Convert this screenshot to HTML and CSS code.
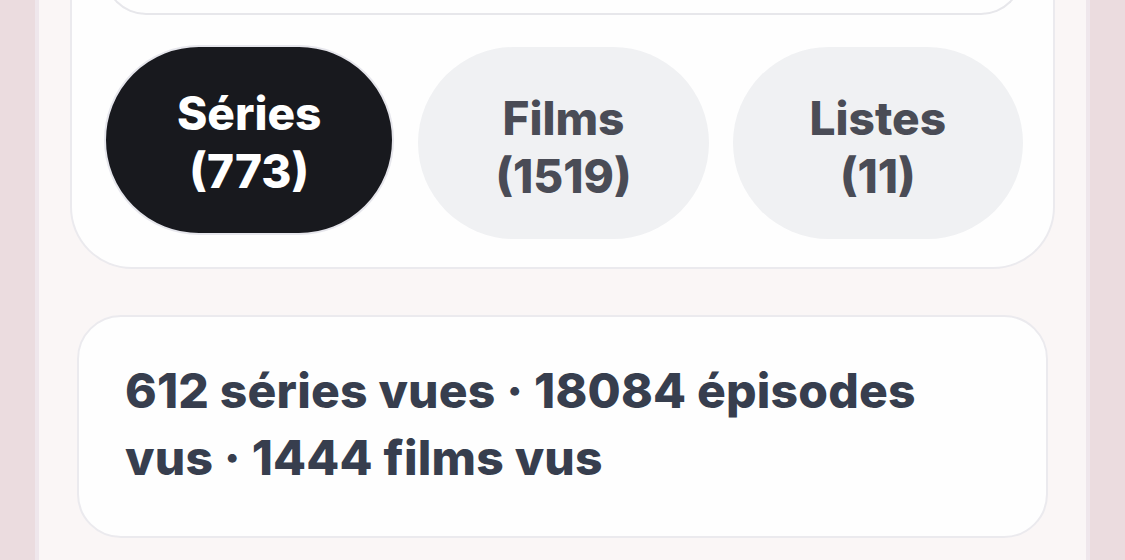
FILE: index.html
```html
<!DOCTYPE html>
<html lang="fr">
<head>
<meta charset="utf-8">
<link rel="stylesheet" href="styles.css">
</head>
<body>
<div class="page">
  <section class="card main-card">
    <div class="inner-card"></div>
    <div class="tabs">
      <button class="pill active">Séries<br>(773)</button>
      <button class="pill">Films<br>(1519)</button>
      <button class="pill">Listes<br>(11)</button>
    </div>
  </section>
  <section class="card stats-card">
    <p class="stats">612 séries vues · 18084 épisodes vus&nbsp;· 1444 films vus</p>
  </section>
</div>
</body>
</html>
```
FILE: styles.css
```css
html, body {
  margin: 0;
  padding: 0;
  height: 100%;
  overflow: hidden;
}
body {
  background: #ebdcdf;
  font-family: Inter, "Noto Sans", sans-serif;
}
.page {
  margin: -80px 35px 0;
  min-height: 800px;
  background: #faf6f6;
  border-left: 4px solid #efe7ec;
  border-right: 4px solid #efe7ec;
  padding: 0 31px;
  box-sizing: border-box;
}
.card {
  background: #fefefe;
  border: 2px solid #ebeaee;
  box-sizing: border-box;
}
.main-card {
  border-top: none;
  border-radius: 0 0 62px 62px;
  padding: 0 30px 28px 32px;
}
.inner-card {
  height: 95px;
  border: 2px solid #e7e7eb;
  border-top: none;
  border-radius: 0 0 42px 42px;
  box-sizing: border-box;
}
.tabs {
  display: flex;
  gap: 24px;
  margin-top: 32px;
}
.pill {
  flex: 1;
  height: 192px;
  border: 2px solid transparent;
  border-radius: 96px;
  background: #f0f1f3;
  color: #4a4c56;
  font-family: inherit;
  font-weight: 800;
  font-size: 46px;
  line-height: 58px;
  padding: 8px 0 0;
}
.pill.active {
  background: #18191e;
  color: #ffffff;
  border-color: #e6e6ec;
  height: 190px;
  margin-top: -2px;
  padding-top: 4px;
}
.stats-card {
  margin: 46px 7px 0;
  border-radius: 44px;
  padding: 40px 46px 45px 46px;
}
.stats {
  margin: 0;
  font-weight: 800;
  font-size: 48px;
  letter-spacing: 0.2px;
  line-height: 67px;
  color: #373e4e;
}
```
